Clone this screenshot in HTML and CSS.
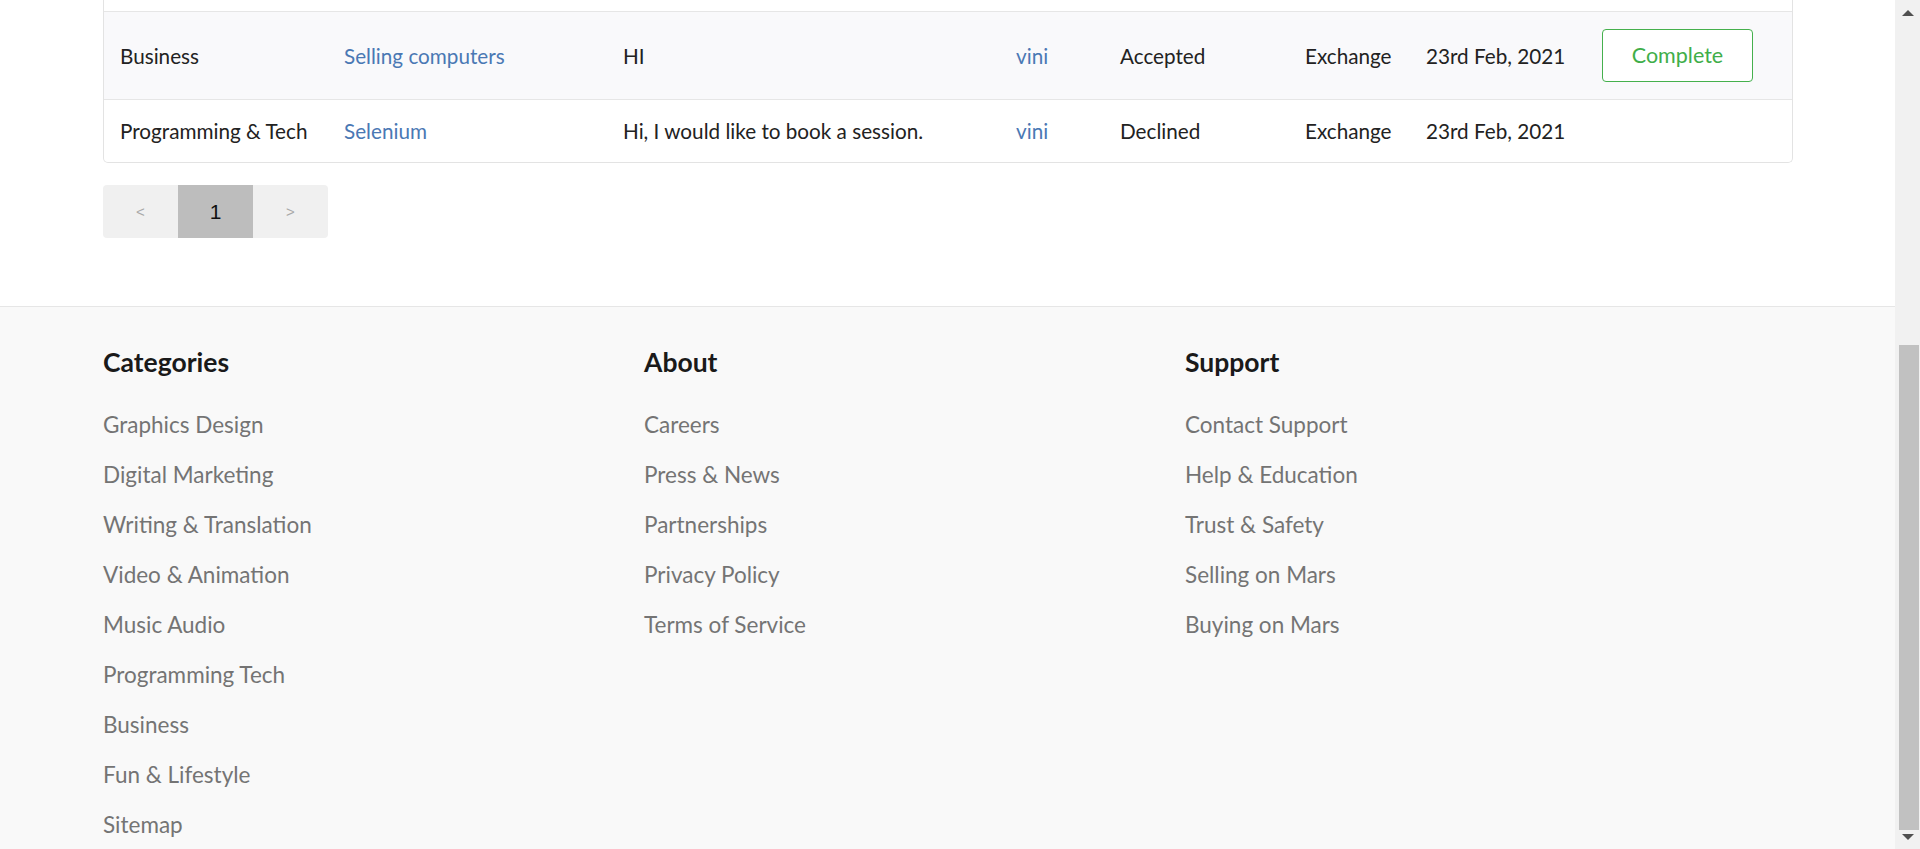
FILE: index.html
```html
<!DOCTYPE html>
<html>
<head>
<meta charset="utf-8">
<link rel="stylesheet" href="styles.css">
</head>
<body>
<div class="window">
  <div class="page">
    <div class="container">
      <table class="orders">
        <colgroup>
          <col class="c1"><col class="c2"><col class="c3"><col class="c4"><col class="c5"><col class="c6"><col class="c7"><col class="c8">
        </colgroup>
        <tbody>
          <tr class="spacer"><td colspan="8"></td></tr>
          <tr class="alt">
            <td>Business</td>
            <td><a href="#">Selling computers</a></td>
            <td>HI</td>
            <td><a href="#">vini</a></td>
            <td>Accepted</td>
            <td>Exchange</td>
            <td>23rd Feb, 2021</td>
            <td><button class="btn-complete">Complete</button></td>
          </tr>
          <tr class="last">
            <td>Programming &amp; Tech</td>
            <td><a href="#">Selenium</a></td>
            <td>Hi, I would like to book a session.</td>
            <td><a href="#">vini</a></td>
            <td>Declined</td>
            <td>Exchange</td>
            <td>23rd Feb, 2021</td>
            <td></td>
          </tr>
        </tbody>
      </table>
      <div class="pagination">
        <span class="pg">&lt;</span>
        <span class="pg active">1</span>
        <span class="pg">&gt;</span>
      </div>
    </div>
    <footer class="footer">
      <div class="footer-grid">
        <div class="fcol">
          <h3>Categories</h3>
          <ul>
            <li>Graphics Design</li>
            <li>Digital Marketing</li>
            <li>Writing &amp; Translation</li>
            <li>Video &amp; Animation</li>
            <li>Music Audio</li>
            <li>Programming Tech</li>
            <li>Business</li>
            <li>Fun &amp; Lifestyle</li>
            <li>Sitemap</li>
          </ul>
        </div>
        <div class="fcol">
          <h3>About</h3>
          <ul>
            <li>Careers</li>
            <li>Press &amp; News</li>
            <li>Partnerships</li>
            <li>Privacy Policy</li>
            <li>Terms of Service</li>
          </ul>
        </div>
        <div class="fcol">
          <h3>Support</h3>
          <ul>
            <li>Contact Support</li>
            <li>Help &amp; Education</li>
            <li>Trust &amp; Safety</li>
            <li>Selling on Mars</li>
            <li>Buying on Mars</li>
          </ul>
        </div>
      </div>
    </footer>
  </div>
  <div class="scrollbar">
    <div class="sb-arrow up"></div>
    <div class="sb-track"><div class="sb-thumb"></div></div>
    <div class="sb-arrow down"></div>
  </div>
</div>
</body>
</html>
```
FILE: styles.css
```css
* { box-sizing: border-box; }
html, body { margin: 0; padding: 0; }
body {
  font-family: Lato, "Open Sans", Arial, sans-serif;
  color: #222;
  background: #fff;
}
.window {
  display: flex;
  width: 1920px;
  height: 849px;
  overflow: hidden;
}
.page {
  width: 1895px;
  flex: 0 0 1895px;
  overflow: hidden;
}
.container {
  width: 1688px;
  margin-left: 103px;
}
.orders {
  width: 1688px;
  table-layout: fixed;
  border-collapse: separate;
  border-spacing: 0;
  border: 1px solid #e3e3e3;
  border-top: none;
  border-radius: 0 0 5px 5px;
  font-size: 20.7px;
  line-height: 28px;
}
.c1 { width: 224px; }
.c2 { width: 279px; }
.c3 { width: 393px; }
.c4 { width: 104px; }
.c5 { width: 185px; }
.c6 { width: 121px; }
.c7 { width: 177px; }
.c8 { width: 205px; }
.orders td {
  padding: 17px 16px;
  border-bottom: 1px solid #e6e6e6;
  white-space: nowrap;
  vertical-align: middle;
}
.orders tr.spacer td {
  padding: 0;
  height: 12px;
}
.orders tr.alt td { background: #f9f9fb; }
.orders tr.last td { border-bottom: none; }
.orders a {
  color: #4a78b4;
  text-decoration: none;
}
.btn-complete {
  font-family: Lato, Arial, sans-serif;
  font-size: 21.5px;
  line-height: 27px;
  color: #3fae49;
  background: #fff;
  border: 1px solid #45b04d;
  border-radius: 4px;
  padding: 12px 0;
  width: 151px;
  margin-left: -1px;
  cursor: pointer;
}
.pagination {
  display: inline-flex;
  margin-top: 22px;
  background: #f0f0f0;
  border-radius: 4px;
  overflow: hidden;
}
.pg {
  width: 75px;
  height: 53px;
  display: flex;
  align-items: center;
  justify-content: center;
  font-family: Arial, "Liberation Sans", sans-serif;
  font-size: 15px;
  color: #a8a8a8;
}
.pg.active {
  background: #bdbdbd;
  color: #111;
  font-size: 21px;
}
.footer {
  margin-top: 68px;
  border-top: 1px solid #e6e6e6;
  background: #f9f9f9;
  padding-top: 41px;
  height: 600px;
}
.footer-grid {
  width: 1688px;
  margin-left: 103px;
  display: grid;
  grid-template-columns: 541px 541px 541px;
}
.fcol h3 {
  margin: 0 0 33px;
  font-size: 26.5px;
  line-height: 29px;
  font-weight: 700;
  color: #1a1a1a;
}
.fcol ul {
  list-style: none;
  margin: 0;
  padding: 0;
}
.fcol li {
  font-size: 22.5px;
  line-height: 30px;
  margin-bottom: 20px;
  color: #747474;
}
.scrollbar {
  flex: 0 0 25px;
  width: 25px;
  background: #f1f1f1;
  display: flex;
  flex-direction: column;
  align-items: center;
}
.sb-arrow {
  width: 0;
  height: 0;
  border-left: 6px solid transparent;
  border-right: 6px solid transparent;
  flex: 0 0 auto;
}
.sb-arrow.up {
  border-bottom: 6px solid #505050;
  margin-top: 10px;
}
.sb-arrow.down {
  border-top: 6px solid #505050;
  margin-bottom: 9px;
}
.sb-track {
  flex: 1;
  width: 100%;
  display: flex;
  justify-content: center;
}
.sb-thumb {
  width: 20px;
  margin-top: 329px;
  height: 485px;
  background: #c1c1c1;
  margin-left: 2px;
}
```
